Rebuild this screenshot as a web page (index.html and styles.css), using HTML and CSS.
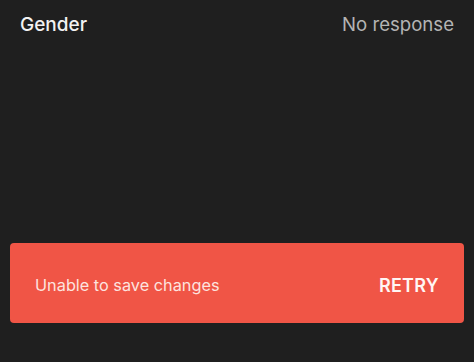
FILE: index.html
```html
<!DOCTYPE html>
<html lang="en">
<head>
    <meta charset="UTF-8">
    <meta name="viewport" content="width=device-width, initial-scale=1.0">
    <title>Profile</title>
    <link rel="stylesheet" href="styles.css">
</head>
<body>
    <div class="screen">
        <div class="field-row">
            <span class="field-label">Gender</span>
            <span class="field-value">No response</span>
        </div>
        <div class="spacer"></div>
        <!-- Error snackbar -->
        <div class="snackbar">
            <span class="snackbar-text">Unable to save changes</span>
            <button class="snackbar-action">RETRY</button>
        </div>
    </div>
</body>
</html>
```

FILE: styles.css
```css
/* Dark profile screen with error snackbar */
body {
    font-family: Inter, "Noto Sans", sans-serif;
    background-color: #1f1f1f;
    margin: 0;
    padding: 0;
}

.screen {
    display: flex;
    flex-direction: column;
    height: 362px;
}

.field-row {
    display: flex;
    justify-content: space-between;
    align-items: center;
    padding: 11px 20px 0 20px;
    height: 26px;
}

.field-label {
    color: #f2f2f2;
    font-size: 19px;
    font-weight: 500;
}

.field-value {
    color: #b4b4b4;
    font-size: 18.6px;
}

.spacer {
    flex: 1;
}

.snackbar {
    display: flex;
    justify-content: space-between;
    align-items: center;
    height: 80px;
    margin: 0 10px 39px 10px;
    padding: 0 25px;
    background-color: #f05546;
    border-radius: 4px;
}

.snackbar-text {
    color: #fde3df;
    font-size: 16.3px;
    padding-top: 4px;
}

.snackbar-action {
    background: none;
    border: none;
    padding: 4px 0 0 0;
    color: #fff6f4;
    font-family: inherit;
    font-size: 18px;
    font-weight: 600;
    letter-spacing: 0.3px;
    cursor: pointer;
}
```
